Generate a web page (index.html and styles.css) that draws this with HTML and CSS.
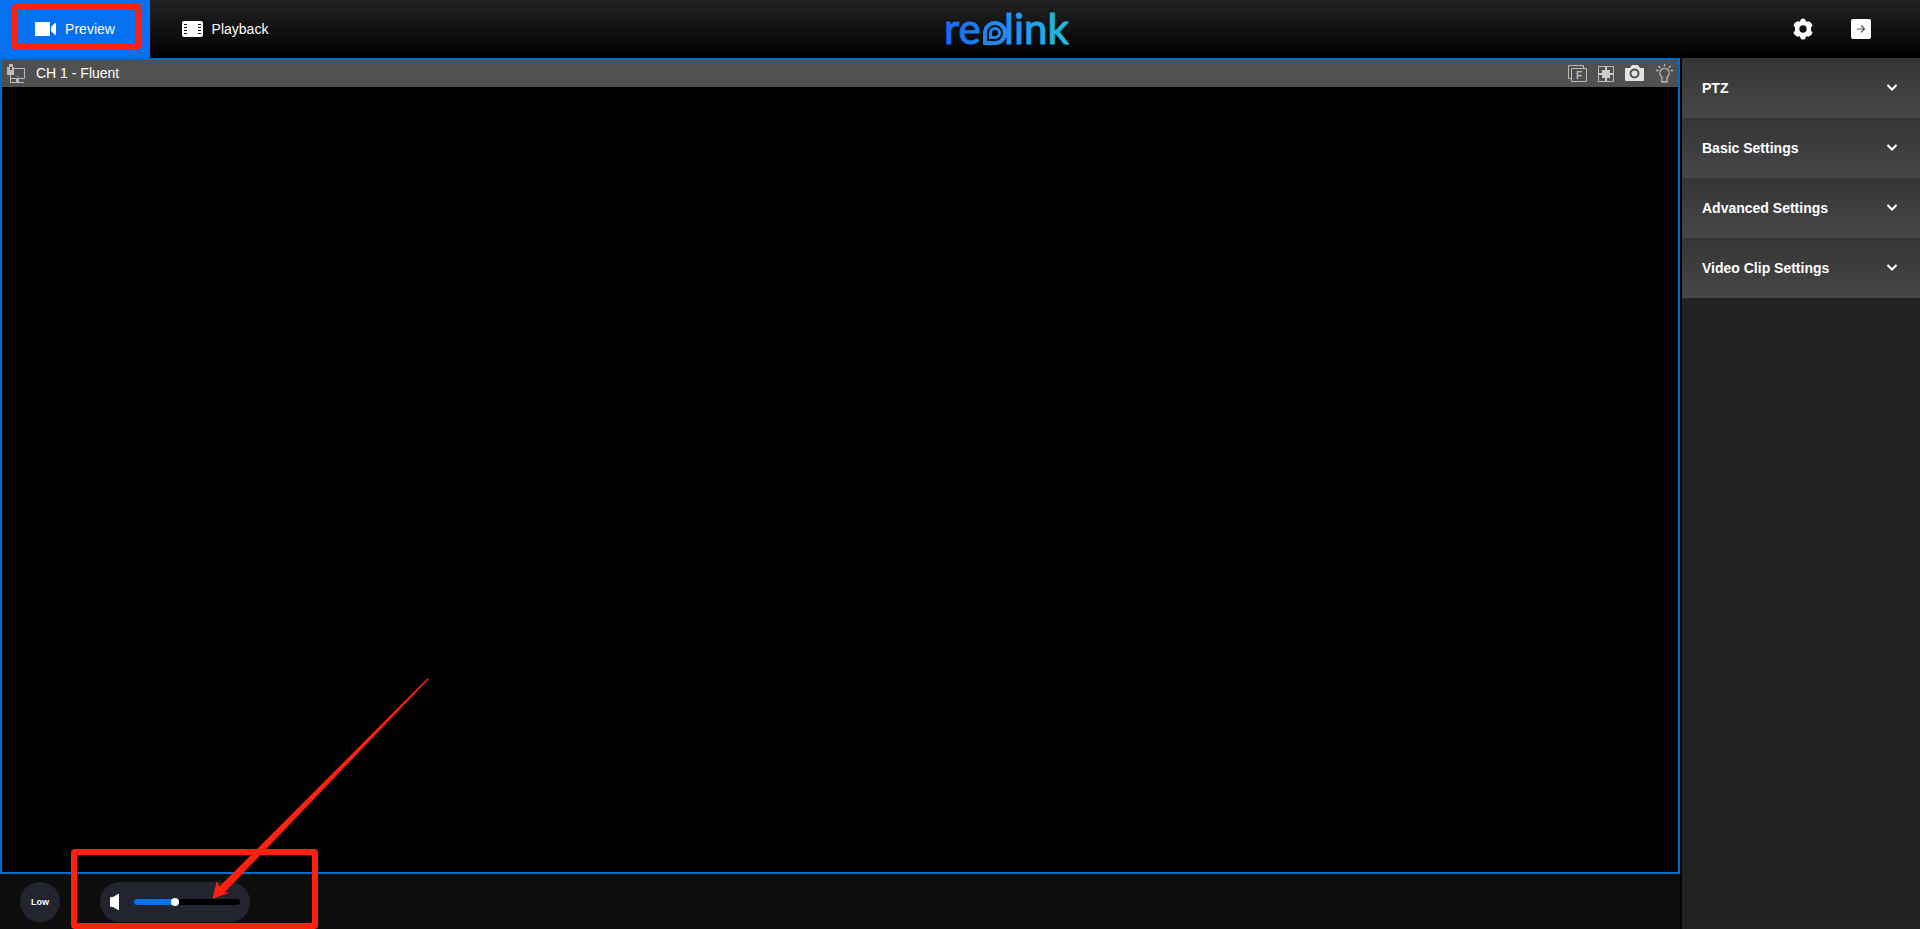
FILE: index.html
```html
<!DOCTYPE html>
<html lang="en">
<head>
<meta charset="utf-8">
<title>Reolink</title>
<link rel="stylesheet" href="styles.css">
</head>
<body>
<header class="header">
  <nav class="tabs">
    <a class="tab tab-active" href="#preview">
      <svg class="tab-icon" width="22" height="16" viewBox="0 0 22 16"><path fill="#fff" d="M0 1h15v14H0zM16 6l4-4h1v12h-1l-4-4z"/></svg>
      <span>Preview</span>
      <i class="mark mark-tab"></i>
    </a>
    <a class="tab" href="#playback">
      <svg class="tab-icon" width="22" height="16" viewBox="0 0 22 16"><rect width="21" height="16" rx="2" fill="#fff"/><path fill="#111" d="M2 3h3v1H2zM2 6h3v1H2zM2 9h3v1H2zM2 12h3v1H2zM16 3h3v1h-3zM16 6h3v1h-3zM16 9h3v1h-3zM16 12h3v1h-3z"/></svg>
      <span>Playback</span>
    </a>
  </nav>
  <svg class="logo" width="130" height="58" viewBox="0 0 130 58" role="img" aria-label="reolink">
    <defs><linearGradient id="brand" gradientUnits="userSpaceOnUse" x1="0" y1="0" x2="130" y2="0"><stop offset="0" stop-color="#1b66f2"/><stop offset=".5" stop-color="#2090ee"/><stop offset="1" stop-color="#1cc4e0"/></linearGradient></defs>
    <g class="logo-text" fill="url(#brand)"><text x="2" y="44">re</text><text x="62" y="44">link</text></g>
    <path fill="none" stroke="url(#brand)" stroke-width="4" d="M43 43V33A10 10 0 1 1 53 43z"/>
    <path fill="url(#brand)" fill-rule="evenodd" d="M47 39V33A6 6 0 1 1 53 39zM50 36h3a3 3 0 1 0-3-3z"/>
  </svg>
  <div class="actions">
    <button class="icon-button" type="button" aria-label="Settings"><svg width="22" height="22" viewBox="0 0 24 24"><path fill="#fff" fill-rule="evenodd" d="M9.500 1.500Q12-.5 14.500 1.500L15.300 4.200 18 3.600Q21.300 4.500 22.500 7.800L20.800 10V14L22.500 16.200Q21.300 19.500 18 20.400L15.300 19.800 14.500 22.500Q12 24.500 9.500 22.500L8.700 19.800 6 20.400Q2.700 19.500 1.500 16.200L3.200 14V10L1.500 7.800Q2.700 4.500 6 3.600L8.700 4.200zM12 8a4 4 0 1 0 0 8a4 4 0 0 0 0-8z"/></svg></button>
    <button class="icon-button" type="button" aria-label="Log out"><svg width="22" height="22" viewBox="0 0 22 22"><rect x="1" y="1" width="20" height="20" rx="2" fill="#fff"/><path d="M7 11h7M11 7.500l3.500 3.500-3.500 3.500" fill="none" stroke="#555" stroke-width="1.200"/></svg></button>
  </div>
</header>
<div class="body">
  <main class="main">
    <section class="viewer">
      <div class="viewer-bar">
        <svg width="19" height="20" viewBox="0 0 19 20"><path fill="none" stroke="#bbb" d="M7 4.500h10.500v10H3.500V11M3.500 14v4.500M3 18.500h14"/><path fill="#bbb" d="M2 0h4v3h1v8H0V3h2zM9 15h3v3H9zM10 12h1v1h-1z"/><path fill="#505050" d="M3 3h2v3H3z"/></svg>
        <span class="viewer-title">CH 1 - Fluent</span>
        <div class="viewer-tools">
          <button class="icon-button" type="button" aria-label="Stream: Fluent"><svg width="19" height="17" viewBox="0 0 19 17"><path fill="none" stroke="#bbb" d="M4 13.500H.5V.5h15V3M3.500 3.500h15v13h-15z"/><text class="stream-letter" x="8" y="14">F</text></svg></button>
          <button class="icon-button" type="button" aria-label="Full screen"><svg width="16" height="16" viewBox="0 0 16 16"><rect x=".5" y=".5" width="15" height="15" fill="none" stroke="#bbb"/><path fill="#ccc" d="M4 4h8v8H4zM7 1h2v3H7zM7 12h2v3H7zM1 7h3v2H1zM12 7h3v2h-3z"/></svg></button>
          <button class="icon-button" type="button" aria-label="Capture"><svg width="20" height="17" viewBox="0 0 20 17"><path fill="#e4e4e4" d="M0 4q0-1 1-1h4l2-3h6l2 3h3q1 0 1 1v11q0 1-1 1H1q-1 0-1-1z"/><circle cx="9.500" cy="8.500" r="4" fill="#e4e4e4" stroke="#505050" stroke-width="2"/></svg></button>
          <button class="icon-button" type="button" aria-label="Light"><svg width="17" height="19" viewBox="0 0 17 19"><path fill="none" stroke="#bbb" stroke-width="1.300" d="M6 14.500q0-1.500-1-2.500a4.600 4.600 0 1 1 7 0q-1 1-1 2.500v3.500H6zM8.500 0v2.500M2.500 2l2 2M14.500 2l-2 2M0 6.500h2.500M14.500 6.500H17"/></svg></button>
        </div>
      </div>
    </section>
    <footer class="controls">
      <button class="quality" type="button">Low</button>
      <div class="volume">
        <svg width="10" height="16" viewBox="0 0 10 16"><path fill="#fff" d="M0 4q0-1 1-1h2l5-3h1v16H8l-5-3H1q-1 0-1-1z"/></svg>
        <input class="slider" type="range" min="0" max="100" value="38" aria-label="Volume">
      </div>
      <i class="mark mark-volume"></i>
      <svg class="arrow" width="220" height="224" viewBox="0 0 220 224"><path fill="#ff2010" d="M2.700 222.700L6.700 205l2.800 5.500L217.500 2.300l1.500.5L14.700 216.300l4.800.5z"/></svg>
    </footer>
  </main>
  <aside class="sidebar">
    <button class="panel" type="button">PTZ<svg class="chevron" width="12" height="8" viewBox="0 0 12 8"><path d="M1.500 1L6 5.500 10.500 1"/></svg></button>
    <button class="panel" type="button">Basic Settings<svg class="chevron" width="12" height="8" viewBox="0 0 12 8"><path d="M1.500 1L6 5.500 10.500 1"/></svg></button>
    <button class="panel" type="button">Advanced Settings<svg class="chevron" width="12" height="8" viewBox="0 0 12 8"><path d="M1.500 1L6 5.500 10.500 1"/></svg></button>
    <button class="panel" type="button">Video Clip Settings<svg class="chevron" width="12" height="8" viewBox="0 0 12 8"><path d="M1.500 1L6 5.500 10.500 1"/></svg></button>
  </aside>
</div>
</body>
</html>
```
FILE: styles.css
```css
* { box-sizing: border-box; }
body {
  margin: 0;
  min-height: 100vh;
  display: flex;
  flex-direction: column;
  background: #000;
  color: #fff;
  font: 14px/20px "Liberation Sans", Arial, sans-serif;
}
button {
  padding: 0;
  border: 0;
  background: none;
  color: inherit;
  font: inherit;
  cursor: pointer;
}
svg { display: block; flex: none; }

.header {
  display: flex;
  align-items: center;
  justify-content: space-between;
  height: 58px;
  background: linear-gradient(#222, #000);
}
.tabs { display: flex; height: 100%; }
.tab {
  position: relative;
  display: flex;
  align-items: center;
  justify-content: center;
  gap: 8px;
  width: 150px;
  color: #fff;
  text-decoration: none;
}
.tab-active { background: #0570f0; }
.logo-text { font: 42px Lato, sans-serif; stroke: url(#brand); stroke-width: 1px; }
.actions {
  display: flex;
  justify-content: flex-end;
  gap: 36px;
  width: 206px;
  padding-right: 48px;
}

.body { display: flex; flex: 1; gap: 2px; }
.main { display: flex; flex: 1; flex-direction: column; }
.viewer { flex: 1; border: 2px solid #006dcc; background: #000; }
.viewer-bar {
  display: flex;
  align-items: center;
  height: 27px;
  padding: 0 5px;
  background: #505050;
}
.viewer-title { padding: 0 0 2px 10px; }
.viewer-tools {
  display: flex;
  align-items: center;
  gap: 11px;
  margin-left: auto;
}
.stream-letter { fill: #bbb; font: bold 10px "Liberation Sans", sans-serif; }

.controls {
  position: relative;
  display: flex;
  align-items: center;
  gap: 40px;
  height: 55px;
  padding: 0 20px;
  background: #0d0d0d;
}
.quality {
  width: 40px;
  height: 40px;
  border-radius: 50%;
  background: #22252d;
  font-size: 9px;
  font-weight: bold;
}
.volume {
  display: flex;
  align-items: center;
  gap: 14px;
  width: 150px;
  height: 40px;
  padding: 0 10px;
  border-radius: 20px;
  background: #22252d;
}
.slider {
  flex: 1;
  min-width: 0;
  height: 6px;
  margin: 0;
  border-radius: 3px;
  appearance: none;
  background: linear-gradient(90deg, #0570f0 38%, #000 38%);
}
.slider::-webkit-slider-thumb {
  appearance: none;
  width: 8px;
  height: 8px;
  border-radius: 50%;
  background: #fff;
}

.sidebar { width: 238px; background: #222; }
.panel {
  display: flex;
  align-items: center;
  justify-content: space-between;
  width: 100%;
  height: 60px;
  padding: 0 22px 0 20px;
  background: linear-gradient(#353535, #464646);
  font-weight: bold;
}
.chevron { fill: none; stroke: #fff; stroke-width: 2; }

.mark { position: absolute; border: 6px solid #ff2010; border-radius: 4px; }
.mark-tab { left: 12px; top: 4px; width: 129px; height: 46px; }
.mark-volume { left: 71px; bottom: 0; width: 247px; height: 80px; }
.arrow { position: absolute; left: 210px; bottom: 29px; }
```
